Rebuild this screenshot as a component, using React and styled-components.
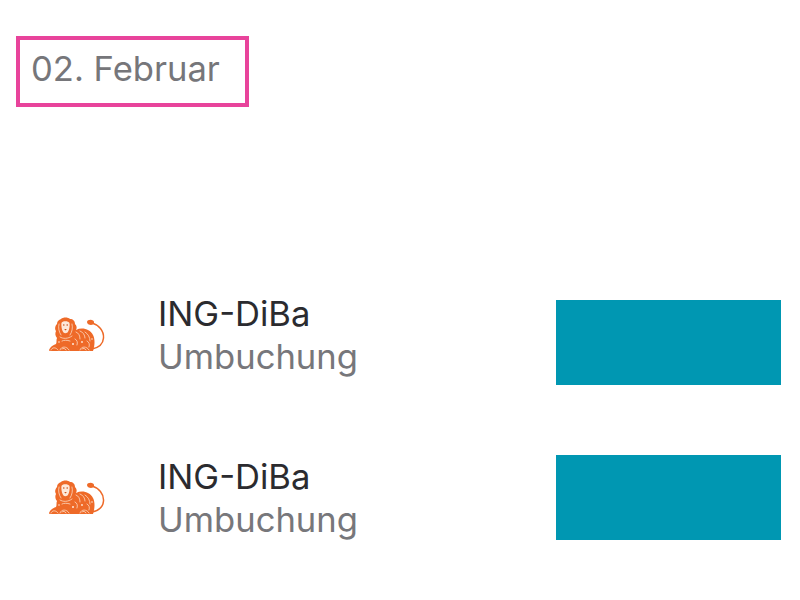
import React from 'react';
import styled, { createGlobalStyle } from 'styled-components';

const GlobalStyle = createGlobalStyle`
  html, body {
    margin: 0;
    padding: 0;
    background: #fff;
    font-family: Inter, "Liberation Sans", sans-serif;
  }
`;

const Page = styled.div`
  width: 800px;
  height: 600px;
  box-sizing: border-box;
  padding: 36px 19px 0 16px;
  overflow: hidden;
  display: flex;
  flex-direction: column;
`;

const DateFrame = styled.div`
  align-self: flex-start;
  box-sizing: border-box;
  width: 233px;
  height: 71px;
  border: 4px solid #e8439b;
  padding: 0 0 7px 11px;
  display: flex;
  align-items: center;
`;

const DateLabel = styled.span`
  font-size: 34.6px;
  color: #76767a;
`;

const List = styled.div`
  margin-top: 186px;
  display: flex;
  flex-direction: column;
  gap: 79px;
`;

const Row = styled.div`
  height: 84px;
  display: flex;
  align-items: center;
`;

const LogoSlot = styled.div`
  width: 142px;
  padding-left: 33px;
  box-sizing: border-box;
  flex: none;
  display: flex;
  align-items: center;
`;

const Texts = styled.div`
  flex: 1;
  display: flex;
  flex-direction: column;
`;

const Title = styled.div`
  font-size: 34.6px;
  line-height: 43px;
  color: #2b2b2f;
`;

const Subtitle = styled.div`
  font-size: 34.6px;
  line-height: 43px;
  color: #77777b;
`;

const Mask = styled.div`
  width: 225px;
  height: 85px;
  background: #0097b2;
  flex: none;
  align-self: flex-start;
  margin-top: ${(p) => p.$shift}px;
`;

function Lion() {
  return (
    <svg width="56" height="36" viewBox="0 0 56 36">
      {/* body, scalloped mane and paws */}
      <path
        fill="#ee6a28"
        d="M0 33 C1 30 4 28 7 27 C8 25 7 23 8 21 C6 19 6 16 7 14 C5 11 7 8 8 7 C8 4 10 3 12 2 C14 0 19 0 21 2 C24 2 26 4 26 7 C28 9 28 11 27 13 C33 10 41 12 44 18 C46 22 46 28 44 34 L2 34 C1 34 0 34 0 33 Z"
      />
      {/* tail */}
      <path
        fill="none"
        stroke="#ee6a28"
        strokeWidth="1.5"
        strokeLinecap="round"
        d="M43 32 C48 31 54 28 54.5 21 C55 14 50 8 42 5.5"
      />
      <path fill="#ee6a28" d="M38 5 C38 3 42 2 44 3.5 C46 5 45 8 42 8 C40 8 38 7 38 5 Z" />
      {/* face */}
      <path
        fill="#fde8d9"
        d="M12.5 6 C13 3.5 19.5 3.5 20.5 6 C21 9 20 14 18.5 15.5 C17 16.5 15.5 16.5 14.5 15.5 C13 14 12 9 12.5 6 Z"
      />
      <g fill="#c9521c">
        <circle cx="14.8" cy="8" r="0.8" />
        <circle cx="18.2" cy="8" r="0.8" />
        <path d="M15.2 12 h2.6 l-1.3 1.5 Z" />
      </g>
      {/* fur marks */}
      <g fill="none" stroke="#fcd9c2" strokeWidth="0.8" strokeLinecap="round">
        <path d="M10 7 C9 11 10 15 12 18 M23 7 C24 11 23 15 21 18 M11 20 C14 22 19 22 23 19 M13 24 C15 23 18 23 21 24" />
        <path d="M27 15 C30 16 31 19 31 22 M31 14 C34 15 36 18 36 21 M36 15 C39 17 41 20 41 24" />
        <path d="M26 22 C28 23 29 25 28 28 M38 24 C40 25 41 27 40 30" />
        <path d="M2 33 C3 30 7 30 9 33 M11 33 C12 29 18 29 20 33 M31 33 C32 29 38 29 40 33" />
        <path d="M13 32 C14 31 16 31 17 33 M33 32 C34 31 36 31 37 33" />
      </g>
      <g fill="#fde8d9">
        <circle cx="24" cy="27" r="1" />
        <circle cx="33" cy="25" r="0.9" />
        <circle cx="43" cy="22" r="0.8" />
        <circle cx="10" cy="25" r="0.8" />
      </g>
    </svg>
  );
}

function Entry({ shift }) {
  return (
    <Row>
      <LogoSlot>
        <Lion />
      </LogoSlot>
      <Texts>
        <Title>ING-DiBa</Title>
        <Subtitle>Umbuchung</Subtitle>
      </Texts>
      <Mask $shift={shift} />
    </Row>
  );
}

export default function App() {
  return (
    <Page>
      <GlobalStyle />
      <DateFrame>
        <DateLabel>02. Februar</DateLabel>
      </DateFrame>
      <List>
        <Entry shift={7} />
        <Entry shift={-1} />
      </List>
    </Page>
  );
}
